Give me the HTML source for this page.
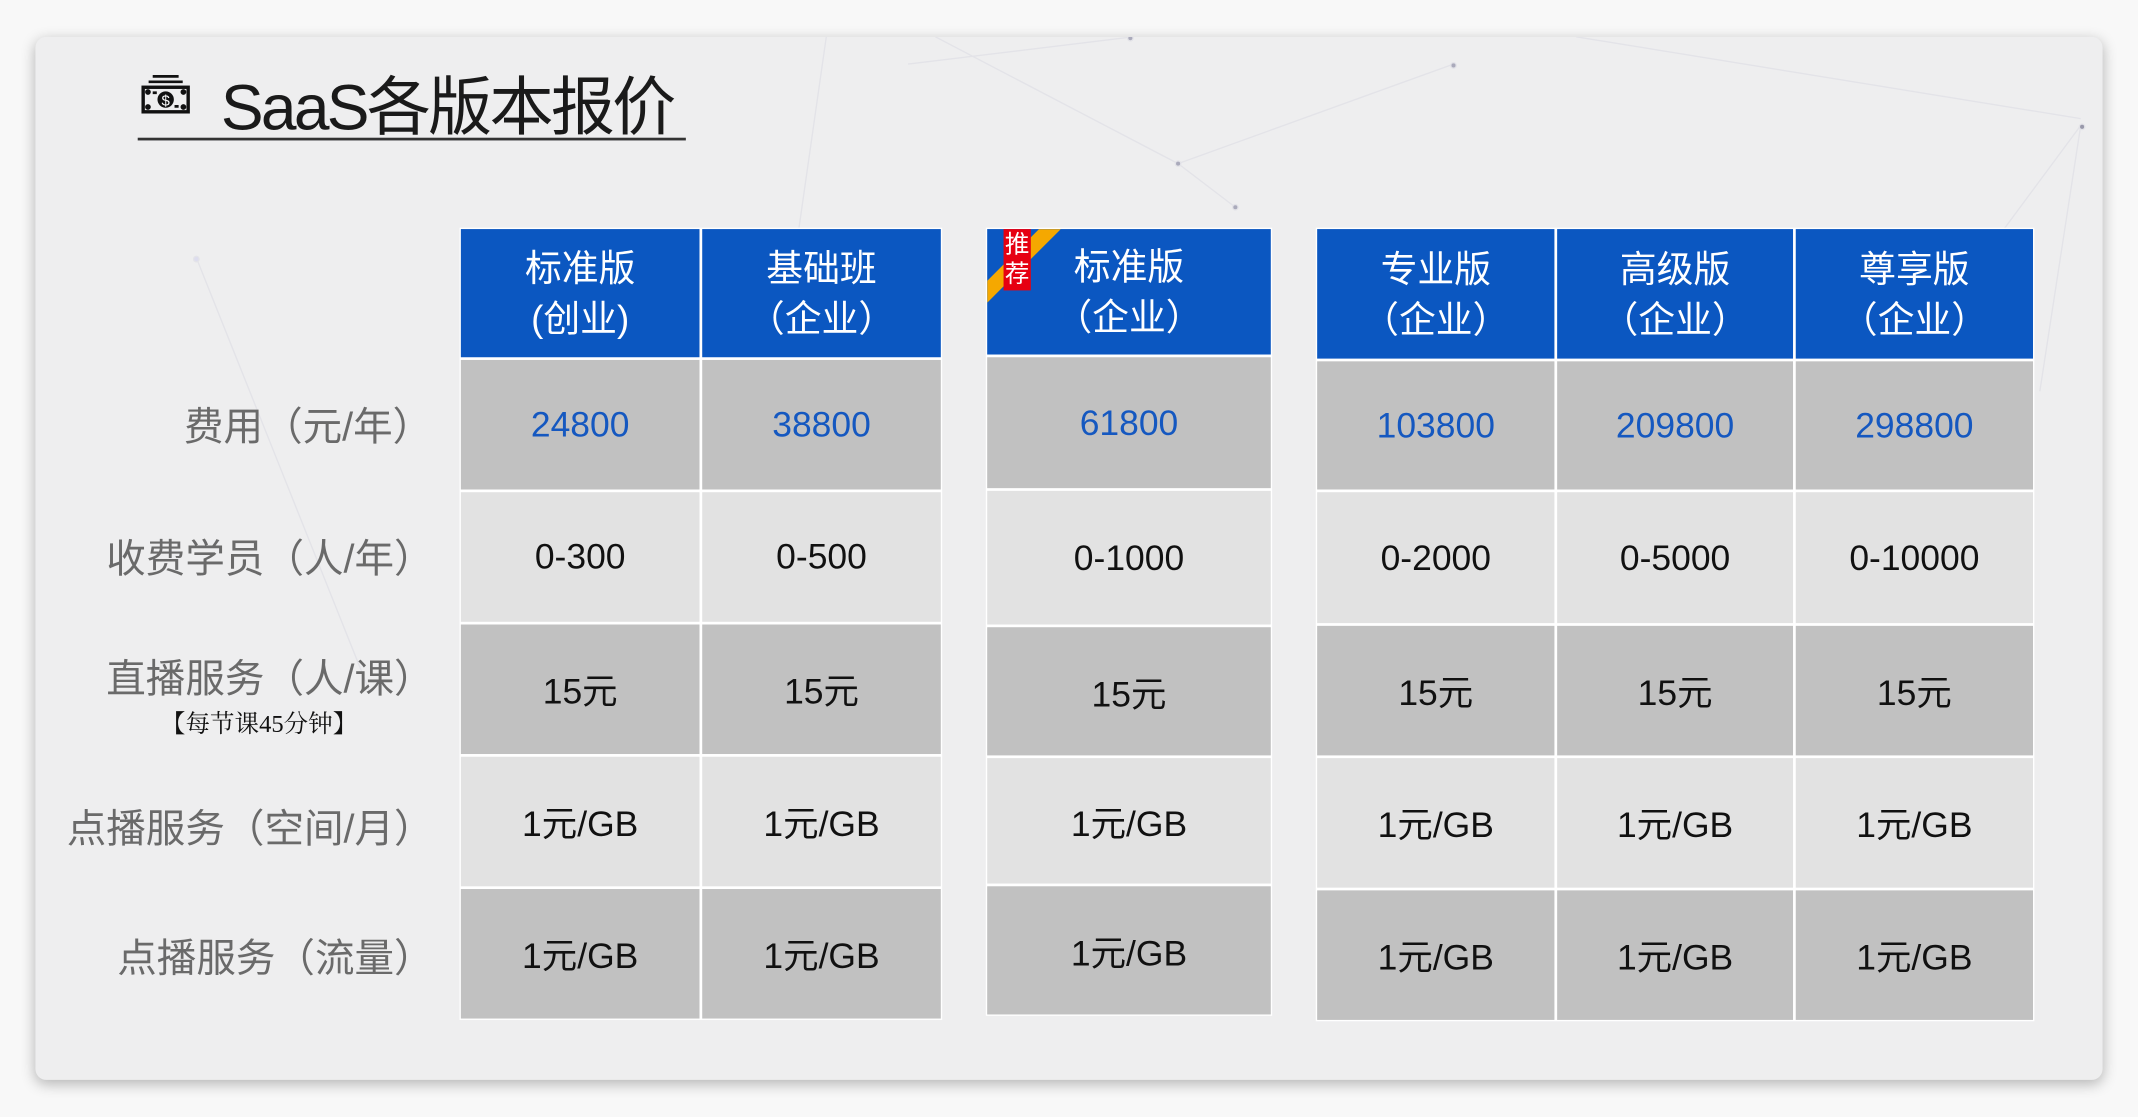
<!DOCTYPE html>
<html><head><meta charset="utf-8"><style>
html,body{margin:0;padding:0;background:#f8f8f8;width:2138px;height:1116px;overflow:hidden}
#s{position:absolute;left:0;top:0;width:1568px;height:819px;transform:scale(1.36352);transform-origin:0 0;font-family:"Liberation Sans","Noto Sans CJK SC",sans-serif}
.card{position:absolute;left:26px;top:27px;width:1516px;height:765px;background:#eeeeef;border-radius:8px;box-shadow:0 3px 10px rgba(0,0,0,.28);overflow:hidden}
.t{position:absolute;display:grid;gap:2px;background:#fff;padding:1px}
.t div{display:flex;align-items:center;justify-content:center;text-align:center;color:#111;font-size:26px}
.h{background:#0b57c1;color:#fff!important;font-size:27px!important;line-height:37px;padding-top:2px}
.d{background:#c1c1c1}.l{background:#e2e2e2}
.b{color:#1558c0!important}
.lab{position:absolute;right:1250px;color:#6a6a6a;font-size:29px;white-space:nowrap;text-align:right}
</style></head><body><div id="s">
<div class="card">
<svg width="1516" height="765" style="position:absolute;left:0;top:0" stroke="#e3e3e8" stroke-width="1" fill="none">
<path d="M118 162 L245 480 M580 0 L560 140 M660 0 L838 93 L880 125 M838 93 L1040 20 M640 20 L805 0 M1130 0 L1500 60 M1500 65 L1470 260 M1500 65 L1400 200"/>
<circle cx="838" cy="93" r="2" fill="#aab"/><circle cx="880" cy="125" r="2" fill="#aab"/><circle cx="1040" cy="21" r="2" fill="#aab"/><circle cx="1501" cy="66" r="2" fill="#99a"/><circle cx="118" cy="163" r="2" fill="#dde"/><circle cx="803" cy="1" r="2" fill="#aab"/>
</svg>
</div>
<svg style="position:absolute;left:103px;top:54px" width="37" height="30" viewBox="0 0 37 30" fill="none" stroke="#111">
<path d="M9 2H28" stroke-width="2"/><path d="M6 6H31" stroke-width="2"/>
<rect x="2" y="10" width="33" height="18" stroke-width="2.5"/>
<circle cx="18.5" cy="19" r="6" fill="#111" stroke="none"/>
<text x="18.5" y="23.5" font-size="11" fill="#fff" stroke="none" text-anchor="middle" font-family="Liberation Sans">$</text>
<circle cx="5.5" cy="13.5" r="1.6" fill="#111"/><circle cx="31.5" cy="13.5" r="1.6" fill="#111"/><circle cx="5.5" cy="24.5" r="1.6" fill="#111"/><circle cx="31.5" cy="24.5" r="1.6" fill="#111"/>
<path d="M9 14H12M25 24H28" stroke-width="2"/>
</svg>
<div style="position:absolute;left:162px;top:40px;font-size:47px;color:#1a1a1a;letter-spacing:-2px">SaaS各版本报价</div>
<div style="position:absolute;left:101px;top:101px;width:402px;height:2px;background:#333"></div>

<div class="lab" style="top:290px;right:1251px">费用（元/年）</div>
<div class="lab" style="top:387px">收费学员（人/年）</div>
<div class="lab" style="top:475px">直播服务（人/课）</div>
<div style="position:absolute;left:118px;top:517px;font-size:18px;color:#111;font-family:'Liberation Serif','Noto Serif CJK SC',serif">【每节课45分钟】</div>
<div class="lab" style="top:585px">点播服务（空间/月）</div>
<div class="lab" style="top:680px">点播服务（流量）</div>

<div class="t" style="left:337px;top:167px;grid-template-columns:175px 175px;grid-template-rows:94px 95px 95px 95px 95px 95px">
<div class="h">标准版<br>(创业)</div><div class="h">基础班<br>（企业）</div>
<div class="d b">24800</div><div class="d b">38800</div>
<div class="l">0-300</div><div class="l">0-500</div>
<div class="d">15元</div><div class="d">15元</div>
<div class="l">1元/GB</div><div class="l">1元/GB</div>
<div class="d">1元/GB</div><div class="d">1元/GB</div>
</div>

<div class="t" style="left:723px;top:167px;grid-template-columns:208px;grid-template-rows:92px 96px 98px 94px 92px 94px">
<div class="h">标准版<br>（企业）</div>
<div class="d b">61800</div>
<div class="l">0-1000</div>
<div class="d">15元</div>
<div class="l">1元/GB</div>
<div class="d">1元/GB</div>
</div>
<svg style="position:absolute;left:724px;top:168px" width="60" height="56"><polygon points="0,38 0,54 54,0 38,0" fill="#f5a800"/></svg>
<div style="position:absolute;left:736px;top:168px;width:20px;height:45px;background:#e60012;color:#fff;font-size:18px;line-height:22px;text-align:center">推荐</div>

<div class="t" style="left:965px;top:167px;grid-template-columns:174px 173px 174px;grid-template-rows:95px 94px 96px 95px 95px 95px">
<div class="h">专业版<br>（企业）</div><div class="h">高级版<br>（企业）</div><div class="h">尊享版<br>（企业）</div>
<div class="d b">103800</div><div class="d b">209800</div><div class="d b">298800</div>
<div class="l">0-2000</div><div class="l">0-5000</div><div class="l">0-10000</div>
<div class="d">15元</div><div class="d">15元</div><div class="d">15元</div>
<div class="l">1元/GB</div><div class="l">1元/GB</div><div class="l">1元/GB</div>
<div class="d">1元/GB</div><div class="d">1元/GB</div><div class="d">1元/GB</div>
</div>
</div></body></html>
